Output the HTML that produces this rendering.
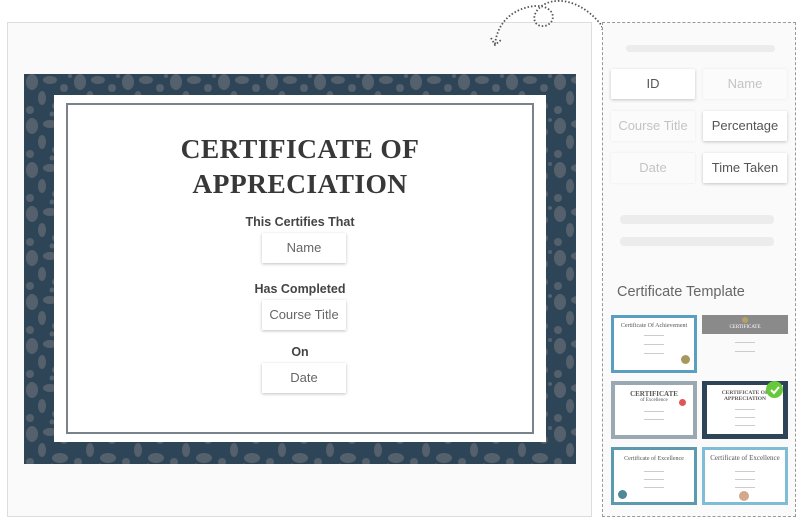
<!DOCTYPE html>
<html><head><meta charset="utf-8"><style>
*{box-sizing:border-box;margin:0;padding:0}
body{width:802px;height:527px;background:#fff;position:relative;overflow:hidden;font-family:"Liberation Sans",sans-serif}
.abs{position:absolute}
.lp{left:7px;top:22px;width:585px;height:495px;border:1px solid #ddd;background:#fafafa}
.frame{left:24px;top:74px;width:552px;height:390px;background:#2e4457;overflow:hidden}
.white{left:54px;top:95px;width:492px;height:347px;background:#fff}
.inner{left:66px;top:103px;width:468px;height:331px;border:2px solid #7a838b}
.title{left:66px;width:468px;top:131px;text-align:center;font-family:"Liberation Serif",serif;font-weight:bold;font-size:27.5px;line-height:35px;color:#383838;letter-spacing:0.4px}
.lbl{width:200px;left:200px;text-align:center;font-weight:bold;font-size:12.5px;color:#444}
.box{background:#fff;box-shadow:0 1px 3px rgba(0,0,0,.25);text-align:center;color:#666;font-size:13px;line-height:30px;height:30px}
.rp{left:602px;top:22px;width:194px;height:495px;border:1px dashed #999;border-top:none;background:#fafafa}
.bar{background:#ececec;border-radius:4px}
.f{width:84px;height:30px;line-height:30px;text-align:center;font-size:13px;border-radius:1px}
.on{background:#fff;color:#555;box-shadow:0 1px 3px rgba(0,0,0,.22)}
.off{background:#fbfbfb;color:#c4c4c4;box-shadow:0 0 2px rgba(0,0,0,.08)}
.th{width:86px;height:58px;overflow:hidden}
.th div{position:absolute}
.tt{font-family:"Liberation Serif",serif;font-size:5px;color:#555;text-align:center;width:100%;left:0}
.ln{height:1px;background:#ccc;left:33px;width:20px}
</style></head><body>
<div class="abs lp"></div>
<div class="abs frame">
<svg width="552" height="390" style="position:absolute;left:0;top:0">
<defs><pattern id="p" width="48" height="44" patternUnits="userSpaceOnUse">
<g fill="#5b6670">
<ellipse cx="8" cy="8" rx="6" ry="8"/><ellipse cx="26" cy="6" rx="7" ry="4"/><circle cx="40" cy="14" r="4"/>
<ellipse cx="18" cy="24" rx="4" ry="7"/><ellipse cx="36" cy="32" rx="8" ry="5"/><circle cx="6" cy="36" r="4"/>
<circle cx="28" cy="40" r="2.5"/><circle cx="46" cy="2" r="2"/></g>
</pattern></defs>
<rect width="552" height="390" fill="url(#p)" opacity="0.85"/>
</svg>
</div>
<div class="abs white"></div>
<div class="abs inner"></div>
<div class="abs title">CERTIFICATE OF<br>APPRECIATION</div>
<div class="abs lbl" style="top:215px">This Certifies That</div>
<div class="abs box" style="left:262px;top:233px;width:84px">Name</div>
<div class="abs lbl" style="top:282px">Has Completed</div>
<div class="abs box" style="left:262px;top:300px;width:84px">Course Title</div>
<div class="abs lbl" style="top:345px">On</div>
<div class="abs box" style="left:262px;top:363px;width:84px">Date</div>

<svg class="abs" style="left:480px;top:0" width="130" height="50" fill="none" stroke="#555" stroke-width="1.8" stroke-dasharray="1.5 2">
<path d="M15 44 C18 20 35 8 55 6 C75 5 78 22 65 26 C50 28 50 8 70 2 C90 -3 110 10 122 26 L122 30"/>
<path d="M11 38 L15 45 L21 40"/>
</svg>
<div class="abs rp"></div>
<div class="abs" style="left:602px;top:22px;width:194px;border-top:1px dashed #999;"></div>
<div class="abs bar" style="left:626px;top:45px;width:149px;height:7px"></div>
<div class="abs f on" style="left:611px;top:69px">ID</div>
<div class="abs f off" style="left:703px;top:69px">Name</div>
<div class="abs f off" style="left:611px;top:111px">Course Title</div>
<div class="abs f on" style="left:703px;top:111px">Percentage</div>
<div class="abs f off" style="left:611px;top:153px">Date</div>
<div class="abs f on" style="left:703px;top:153px">Time Taken</div>
<div class="abs bar" style="left:620px;top:215px;width:154px;height:9px"></div>
<div class="abs bar" style="left:620px;top:237px;width:154px;height:9px"></div>
<div class="abs" style="left:617px;top:284px;font-size:14.5px;color:#666">Certificate Template</div>

<div class="abs th" style="left:611px;top:315px;background:#5a9fbf"><div style="left:3px;top:3px;right:3px;bottom:3px;background:#fff"></div><div class="tt" style="top:8px;font-size:6px">Certificate Of Achievement</div><div class="ln" style="top:20px"></div><div class="ln" style="top:29px"></div><div class="ln" style="top:38px"></div><div style="left:70px;top:40px;width:9px;height:9px;border-radius:50%;background:#a89860"></div></div>
<div class="abs th" style="left:702px;top:315px;background:#fafafa"><div style="left:0;top:0;width:86px;height:19px;background:#8a8a8a"></div><div style="left:40px;top:2px;width:6px;height:6px;border-radius:50%;background:#b8a060"></div><div class="tt" style="top:10px;color:#fff">CERTIFICATE</div><div class="ln" style="top:27px"></div><div class="ln" style="top:36px"></div></div>
<div class="abs th" style="left:611px;top:381px;background:#9aa8b2"><div style="left:4px;top:4px;right:4px;bottom:4px;background:#fff"></div><div class="tt" style="top:9px;font-size:7px;font-weight:bold">CERTIFICATE</div><div class="tt" style="top:17px;font-size:5px">of Excellence</div><div class="ln" style="top:30px"></div><div class="ln" style="top:38px"></div><div style="left:68px;top:18px;width:7px;height:7px;border-radius:50%;background:#e05555"></div></div>
<div class="abs th" style="left:702px;top:381px;background:#2e4457"><div style="left:5px;top:4px;right:5px;bottom:5px;background:#fff"></div><div class="tt" style="top:9px;font-size:5.5px;font-weight:bold;line-height:6px">CERTIFICATE OF<br>APPRECIATION</div><div class="ln" style="top:28px"></div><div class="ln" style="top:36px"></div><div class="ln" style="top:44px"></div><div style="left:64px;top:0px;width:17px;height:17px;border-radius:50%;background:#66c83a"></div><svg style="position:absolute;left:67px;top:3px" width="11" height="11"><path d="M2 6 L5 9 L10 3" stroke="#fff" stroke-width="2" fill="none"/></svg></div>
<div class="abs th" style="left:611px;top:447px;background:#5c9ab0"><div style="left:3px;top:3px;right:3px;bottom:3px;background:#fff"></div><div class="tt" style="top:9px;font-size:6px">Certificate of Excellence</div><div class="ln" style="top:24px"></div><div class="ln" style="top:32px"></div><div class="ln" style="top:40px"></div><div style="left:7px;top:43px;width:9px;height:9px;border-radius:50%;background:#4d8898"></div></div>
<div class="abs th" style="left:702px;top:447px;background:#7fbcd6"><div style="left:3px;top:3px;right:3px;bottom:3px;background:#fff"></div><div class="tt" style="top:7px;font-size:7px">Certificate of Excellence</div><div class="ln" style="top:24px"></div><div class="ln" style="top:32px"></div><div class="ln" style="top:40px"></div><div style="left:37px;top:44px;width:10px;height:10px;border-radius:50%;background:#d4a88a"></div></div>
</body></html>
